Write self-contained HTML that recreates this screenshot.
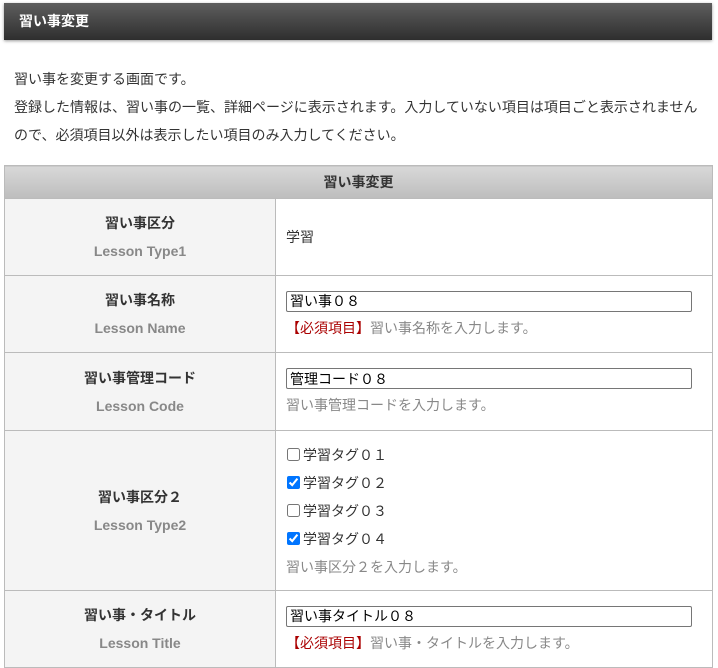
<!DOCTYPE html>
<html><head><meta charset="utf-8"><style>
body{margin:0;background:#fff;font-family:"Liberation Sans","Noto Sans CJK JP",sans-serif;color:#333;font-size:14px;}
.hd{position:absolute;left:4px;top:3px;width:708px;height:37px;background:linear-gradient(#5e5e5e,#2e2e2e);box-shadow:0 1px 3px rgba(0,0,0,.4);color:#fff;font-weight:bold;font-size:14px;line-height:37px;padding-left:15px;box-sizing:border-box}
.intro{position:absolute;left:14px;top:65px;font-size:14px;line-height:28px;color:#333}
table{position:absolute;left:4px;top:165px;width:709px;border-collapse:collapse}
td,th{border:1px solid #bbb}
th{height:32px;padding:0;background:linear-gradient(#d8d8d8,#bdbdbd);font-size:14px;color:#333}
td.l{width:268px;background:#f4f4f4;text-align:center;font-weight:bold;font-size:14px;line-height:28px}
td.l span{display:block;color:#888;}
td.r{padding:0 10px 0 10px;font-size:14px}
input[type=text]{width:406px;height:21px;box-sizing:border-box;border:1px solid #767676;border-radius:2px;font:14px "Liberation Sans","Noto Sans CJK JP",sans-serif;padding:0 3px;margin:0}
.n{color:#888;margin-top:6px}
.req{color:#a00}
.cb{line-height:28px}
.cb input{margin:0 3px 0 1px;vertical-align:-1px;width:13px;height:13px}
</style></head><body>
<div class="hd">習い事変更</div>
<div class="intro">習い事を変更する画面です。<br>登録した情報は、習い事の一覧、詳細ページに表示されます。入力していない項目は項目ごと表示されません<br>ので、必須項目以外は表示したい項目のみ入力してください。</div>
<table>
<tr><th colspan="2">習い事変更</th></tr>
<tr style="height:77px"><td class="l">習い事区分<span>Lesson Type1</span></td><td class="r">学習</td></tr>
<tr style="height:77px"><td class="l">習い事名称<span>Lesson Name</span></td><td class="r"><input type="text" value="習い事０８"><div class="n"><span class="req">【必須項目】</span>習い事名称を入力します。</div></td></tr>
<tr style="height:78px"><td class="l">習い事管理コード<span>Lesson Code</span></td><td class="r"><input type="text" value="管理コード０８"><div class="n">習い事管理コードを入力します。</div></td></tr>
<tr style="height:160px"><td class="l">習い事区分２<span>Lesson Type2</span></td><td class="r"><div class="cb"><input type="checkbox">学習タグ０１</div><div class="cb"><input type="checkbox" checked>学習タグ０２</div><div class="cb"><input type="checkbox">学習タグ０３</div><div class="cb"><input type="checkbox" checked>学習タグ０４</div><div class="n" style="margin-top:0;line-height:28px">習い事区分２を入力します。</div></td></tr>
<tr style="height:77px"><td class="l">習い事・タイトル<span>Lesson Title</span></td><td class="r"><input type="text" value="習い事タイトル０８"><div class="n"><span class="req">【必須項目】</span>習い事・タイトルを入力します。</div></td></tr>
</table>
</body></html>
